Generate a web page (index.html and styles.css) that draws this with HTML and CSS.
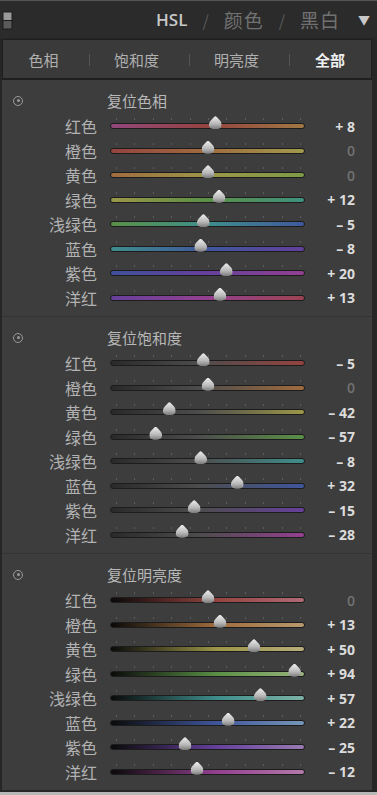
FILE: index.html
```html
<!DOCTYPE html>
<html lang="zh-CN">
<head>
  <meta charset="UTF-8" />
  <meta name="viewport" content="width=device-width, initial-scale=1.0" />
  <title>HSL</title>
  <link rel="stylesheet" href="styles.css">
</head>
<body>
  <div class="panel">

    <div class="topbar">
      <svg class="toggle" width="11" height="19" viewBox="0 0 11 19">
        <rect x="0.5" y="0.5" width="10" height="18" fill="#1c1c1c"/>
        <rect x="1.5" y="1.5" width="8" height="7.5" fill="#9a9a9a"/>
        <rect x="1.5" y="10" width="8" height="7.5" fill="#5a5a5a"/>
      </svg>
      <div class="modes">
        <span class="mode active">HSL</span>
        <span class="slash">/</span>
        <span class="mode">颜色</span>
        <span class="slash">/</span>
        <span class="mode">黑白</span>
        <span class="arrow">▼</span>
      </div>
    </div>

    <div class="tabs">
      <span class="tab">色相</span>
      <span class="tab">饱和度</span>
      <span class="tab">明亮度</span>
      <span class="tab active">全部</span>
    </div>

    <div class="content">

      <!-- Hue -->
      <div class="section hue">
        <div class="section-head">
          <i class="target"></i>
          <span>复位色相</span>
        </div>
        <div class="row c-red"><span class="name">红色</span><div class="slider"><div class="track"></div><i class="thumb" style="left:105.4px"></i></div><span class="val">+ 8</span></div>
        <div class="row c-orange"><span class="name">橙色</span><div class="slider"><div class="track"></div><i class="thumb" style="left:98px"></i></div><span class="val zero">0</span></div>
        <div class="row c-yellow"><span class="name">黄色</span><div class="slider"><div class="track"></div><i class="thumb" style="left:98px"></i></div><span class="val zero">0</span></div>
        <div class="row c-green"><span class="name">绿色</span><div class="slider"><div class="track"></div><i class="thumb" style="left:109px"></i></div><span class="val">+ 12</span></div>
        <div class="row c-aqua"><span class="name">浅绿色</span><div class="slider"><div class="track"></div><i class="thumb" style="left:93.4px"></i></div><span class="val">– 5</span></div>
        <div class="row c-blue"><span class="name">蓝色</span><div class="slider"><div class="track"></div><i class="thumb" style="left:90.6px"></i></div><span class="val">– 8</span></div>
        <div class="row c-purple"><span class="name">紫色</span><div class="slider"><div class="track"></div><i class="thumb" style="left:116.4px"></i></div><span class="val">+ 20</span></div>
        <div class="row c-magenta"><span class="name">洋红</span><div class="slider"><div class="track"></div><i class="thumb" style="left:110px"></i></div><span class="val">+ 13</span></div>
      </div>

      <!-- Saturation -->
      <div class="section sat">
        <div class="section-head">
          <i class="target"></i>
          <span>复位饱和度</span>
        </div>
        <div class="row c-red"><span class="name">红色</span><div class="slider"><div class="track"></div><i class="thumb" style="left:93.4px"></i></div><span class="val">– 5</span></div>
        <div class="row c-orange"><span class="name">橙色</span><div class="slider"><div class="track"></div><i class="thumb" style="left:98px"></i></div><span class="val zero">0</span></div>
        <div class="row c-yellow"><span class="name">黄色</span><div class="slider"><div class="track"></div><i class="thumb" style="left:59.4px"></i></div><span class="val">– 42</span></div>
        <div class="row c-green"><span class="name">绿色</span><div class="slider"><div class="track"></div><i class="thumb" style="left:45.6px"></i></div><span class="val">– 57</span></div>
        <div class="row c-aqua"><span class="name">浅绿色</span><div class="slider"><div class="track"></div><i class="thumb" style="left:90.6px"></i></div><span class="val">– 8</span></div>
        <div class="row c-blue"><span class="name">蓝色</span><div class="slider"><div class="track"></div><i class="thumb" style="left:127.4px"></i></div><span class="val">+ 32</span></div>
        <div class="row c-purple"><span class="name">紫色</span><div class="slider"><div class="track"></div><i class="thumb" style="left:84.2px"></i></div><span class="val">– 15</span></div>
        <div class="row c-magenta"><span class="name">洋红</span><div class="slider"><div class="track"></div><i class="thumb" style="left:72.2px"></i></div><span class="val">– 28</span></div>
      </div>

      <!-- Luminance -->
      <div class="section lum">
        <div class="section-head">
          <i class="target"></i>
          <span>复位明亮度</span>
        </div>
        <div class="row c-red"><span class="name">红色</span><div class="slider"><div class="track"></div><i class="thumb" style="left:98px"></i></div><span class="val zero">0</span></div>
        <div class="row c-orange"><span class="name">橙色</span><div class="slider"><div class="track"></div><i class="thumb" style="left:110px"></i></div><span class="val">+ 13</span></div>
        <div class="row c-yellow"><span class="name">黄色</span><div class="slider"><div class="track"></div><i class="thumb" style="left:144px"></i></div><span class="val">+ 50</span></div>
        <div class="row c-green"><span class="name">绿色</span><div class="slider"><div class="track"></div><i class="thumb" style="left:184.5px"></i></div><span class="val">+ 94</span></div>
        <div class="row c-aqua"><span class="name">浅绿色</span><div class="slider"><div class="track"></div><i class="thumb" style="left:150.4px"></i></div><span class="val">+ 57</span></div>
        <div class="row c-blue"><span class="name">蓝色</span><div class="slider"><div class="track"></div><i class="thumb" style="left:118.2px"></i></div><span class="val">+ 22</span></div>
        <div class="row c-purple"><span class="name">紫色</span><div class="slider"><div class="track"></div><i class="thumb" style="left:75px"></i></div><span class="val">– 25</span></div>
        <div class="row c-magenta"><span class="name">洋红</span><div class="slider"><div class="track"></div><i class="thumb" style="left:87px"></i></div><span class="val">– 12</span></div>
      </div>

    </div>
  </div>
</body>
</html>
```

FILE: styles.css
```css
body {
  margin: 0;
  background: #262626;
  font-family: "Open Sans", "Noto Sans CJK SC", sans-serif;
  color: #b4b4b4;
  overflow: hidden;
}

.panel {
  width: 377px;
  height: 795px;
  box-sizing: border-box;
  background: #262626;
  border-bottom: 3px solid #b8b8b8;
  display: flex;
  flex-direction: column;
}

/* Top bar */
.topbar {
  height: 38px;
  box-sizing: border-box;
  border-top: 1px solid #555;
  background: #2b2b2b;
  display: flex;
  align-items: center;
  padding-left: 2px;
}

.toggle {
  display: block;
  margin-top: 2px;
}

.modes {
  margin-left: auto;
  display: flex;
  align-items: center;
  padding-right: 7px;
  font-family: "Noto Sans CJK SC", sans-serif;
}

.mode {
  font-size: 19px;
  color: #717171;
  letter-spacing: 1px;
}

.mode.active {
  font-family: "Open Sans", sans-serif;
  font-weight: 600;
  font-size: 17px;
  color: #c8c8c8;
  letter-spacing: 0;
}

.slash {
  color: #5a5a5a;
  font-size: 16px;
  margin: 0 15px;
}

.arrow {
  color: #c8c8c8;
  font-size: 12px;
  margin-left: 18px;
}

/* Tabs */
.tabs {
  height: 41px;
  box-sizing: border-box;
  margin: 1px 5px 0 2px;
  background: #3a3a3a;
  border: 1px solid #1f1f1f;
  border-bottom-width: 2px;
  display: grid;
  grid-template-columns: 86px 100px 100px 1fr;
  align-items: center;
  font-family: "Noto Sans CJK SC", sans-serif;
  font-size: 15px;
}

.tab {
  position: relative;
  text-align: center;
  padding-right: 5px;
  color: #b0b0b0;
}

.tab + .tab::before {
  content: "";
  position: absolute;
  left: 0;
  top: 50%;
  width: 1px;
  height: 12px;
  margin-top: -5px;
  background: #555;
}

.tab.active {
  color: #f0f0f0;
  font-weight: 700;
  padding-right: 0;
}

/* Content */
.content {
  flex: 1;
  margin: 0 5px 2px 2px;
  background: #3d3d3d;
}

.section {
  padding: 7px 0 6px;
}

.section + .section {
  border-top: 1px solid #333;
}

.section-head {
  height: 27px;
  display: flex;
  align-items: center;
  font-family: "Noto Sans CJK SC", sans-serif;
  font-size: 15px;
  color: #b8b8b8;
}

.target {
  width: 8px;
  height: 8px;
  margin-left: 11px;
  border: 1.5px solid #9a9a9a;
  border-radius: 50%;
  display: flex;
  align-items: center;
  justify-content: center;
}

.target::after {
  content: "";
  width: 3px;
  height: 3px;
  border-radius: 50%;
  background: #9a9a9a;
}

.section-head span {
  margin-left: 84px;
}

.row {
  height: 24.5px;
  display: grid;
  grid-template-columns: 108px 195px 50px;
  align-items: center;
}

.name {
  text-align: right;
  padding-right: 13px;
  font-family: "Noto Sans CJK SC", sans-serif;
  font-size: 16px;
  line-height: 1;
  color: #b2b2b2;
}

.val {
  text-align: right;
  font-weight: 700;
  font-size: 14px;
  color: #dcdcdc;
}

.val.zero {
  color: #727272;
  font-weight: 600;
}

/* Slider */
.slider {
  position: relative;
  height: 6px;
}

.slider::before {
  content: "";
  position: absolute;
  left: 6px;
  top: -5px;
  width: 185px;
  height: 2px;
  background: repeating-linear-gradient(90deg, #5c5c5c 0 1px, transparent 1px 18.4px);
}

.track {
  height: 100%;
  box-sizing: border-box;
  border: 1px solid #1c1c1c;
  border-radius: 3px;
}

.thumb {
  position: absolute;
  top: -7px;
  width: 13px;
  height: 13px;
  transform: translateX(-50%);
  background: linear-gradient(#eeeeee, #b8b8b8 60%, #7a7a7a);
  clip-path: path('M6.5 0 C7.5 0 8 1 9 2 C11 4 13 6 13 8.5 C13 11.5 10.5 13 6.5 13 C2.5 13 0 11.5 0 8.5 C0 6 2 4 4 2 C5 1 5.5 0 6.5 0 Z');
}

/* Colours: --l left neighbour, --c main, --r right neighbour, --lt light */
.c-red     { --l: #93477c; --c: #94433f; --r: #a07843; --lt: #b06a76; }
.c-orange  { --l: #94433f; --c: #a06c3e; --r: #a09a4c; --lt: #b8996e; }
.c-yellow  { --l: #a06c3e; --c: #9c9648; --r: #7e9a46; --lt: #b6ad7a; }
.c-green   { --l: #9c9648; --c: #5a9046; --r: #3e907e; --lt: #99b47c; }
.c-aqua    { --l: #5a9046; --c: #3e8e8c; --r: #40589c; --lt: #7cb2a6; }
.c-blue    { --l: #3e8e8c; --c: #40569c; --r: #62409c; --lt: #7696b6; }
.c-purple  { --l: #40509c; --c: #66409c; --r: #924090; --lt: #987ab2; }
.c-magenta { --l: #66409c; --c: #944090; --r: #9c4452; --lt: #b27aa8; }

.hue .track { background: linear-gradient(90deg, var(--l), var(--c) 50%, var(--r)); }
.sat .track { background: linear-gradient(90deg, #2a2a2a, #4c4c4c 45%, var(--c)); }
.lum .track { background: linear-gradient(90deg, #0a0a0a, var(--c) 55%, var(--lt)); }
```
